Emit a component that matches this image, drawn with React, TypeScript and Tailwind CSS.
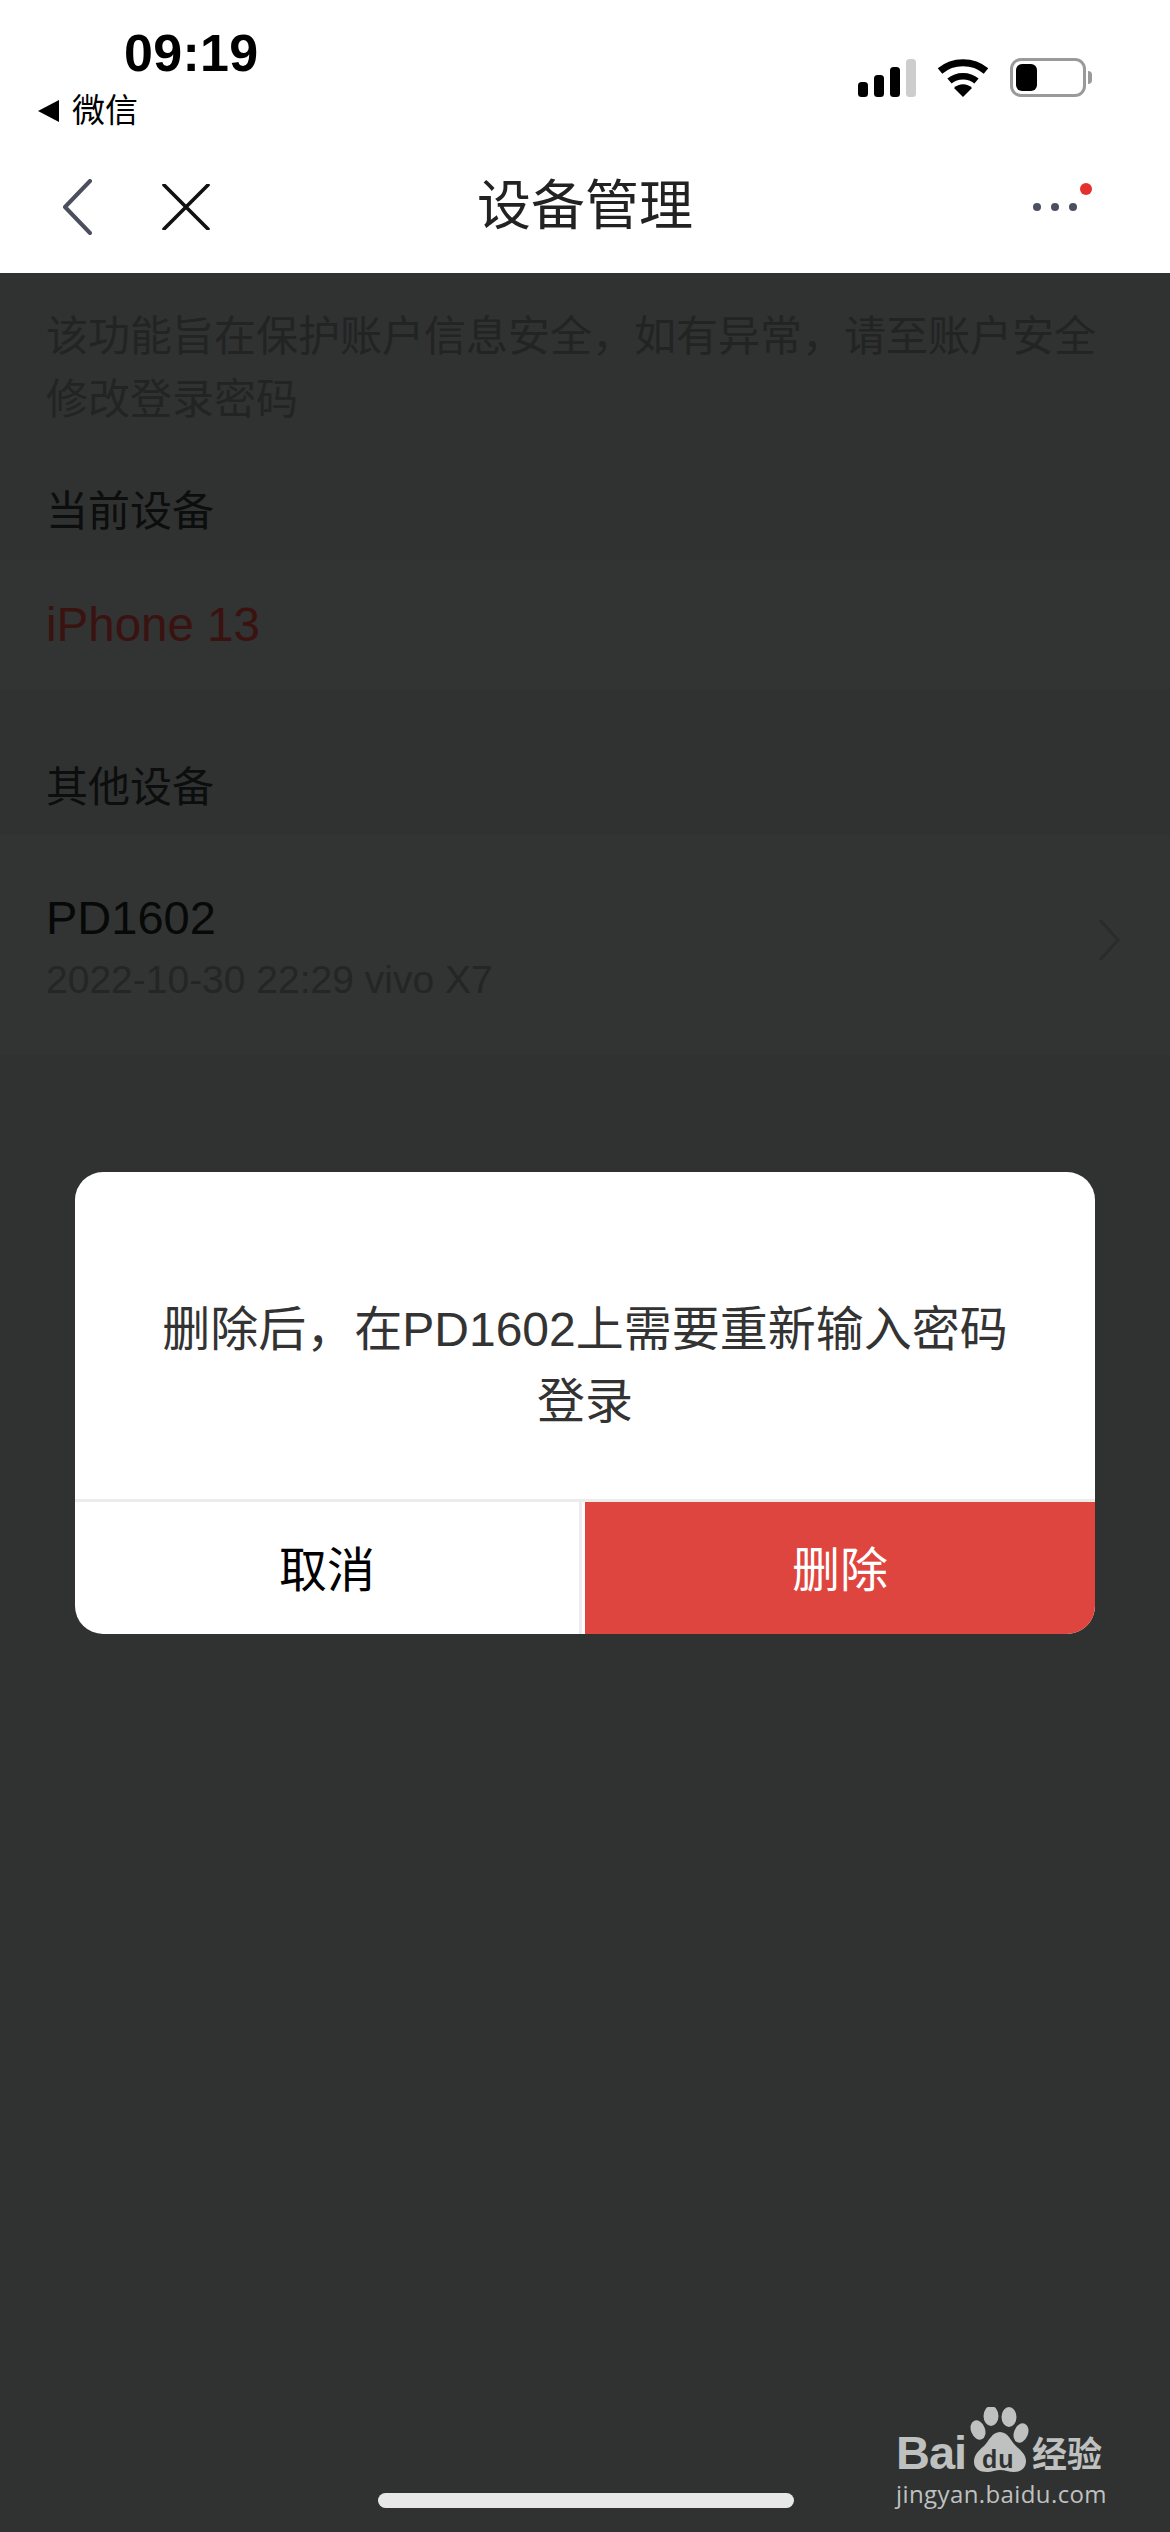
export default function App() {
  const font = "font-['Liberation_Sans','Noto_Sans_CJK_SC',sans-serif]";
  return (
    <div className={`relative w-[1170px] h-[2532px] overflow-hidden bg-[#303131] ${font}`}>
      {/* status + nav */}
      <header className="h-[273px] bg-white flex flex-col">
        <div className="h-[150px] flex justify-between">
          <div className="flex flex-col pl-[38px] pt-[24px]">
            <span className="pl-[86px] text-[52px] leading-[58px] font-bold text-black tracking-[0.3px]">09:19</span>
            <div className="flex items-center gap-[12px] mt-[9px]">
              <svg width="22" height="22" viewBox="0 0 22 22"><path d="M21 0v22L0 11z" fill="#000" /></svg>
              <span className="text-[33px] leading-[40px] text-black">微信</span>
            </div>
          </div>
          <div className="flex items-start pt-[58px] pr-[78px] gap-[21px]">
            <svg width="58" height="38" viewBox="0 0 58 38" className="mt-[1px]">
              <rect x="0" y="23" width="10" height="15" rx="3.5" fill="#000" />
              <rect x="16" y="16" width="10" height="22" rx="3.5" fill="#000" />
              <rect x="32" y="8" width="10" height="30" rx="3.5" fill="#000" />
              <rect x="48" y="0" width="10" height="38" rx="3.5" fill="#cdcdcd" />
            </svg>
            <svg width="52" height="38" viewBox="0 0 52 38" className="mt-[1px]">
              <path d="M3 12C16 1 36 1 49 12" fill="none" stroke="#000" strokeWidth="7" />
              <path d="M12.5 22C20 15.5 32 15.5 39.5 22" fill="none" stroke="#000" strokeWidth="6.5" />
              <path d="M17 29C22 24 30 24 35 29L26 38z" fill="#000" />
            </svg>
            <div className="flex items-center">
              <div className="w-[76px] h-[39px] rounded-[11px] border-[3px] border-[#9a9a9a] p-[3px]">
                <div className="w-[21px] h-full rounded-[6px] bg-black" />
              </div>
              <div className="ml-[2px] w-[4px] h-[13px] rounded-r-[4px] bg-[#9a9a9a]" />
            </div>
          </div>
        </div>
        <div className="relative h-[123px] flex items-center justify-center pb-[11px]">
          <div className="absolute left-[62px] top-[29px]">
            <svg width="30" height="56" viewBox="0 0 30 56"><path d="M28 2L3 28l25 26" fill="none" stroke="#4b4e5c" strokeWidth="4" strokeLinecap="round" strokeLinejoin="round" /></svg>
          </div>
          <div className="absolute left-[162px] top-[34px]">
            <svg width="48" height="46" viewBox="0 0 48 46"><path d="M2 1l44 44M46 1L2 45" fill="none" stroke="#111" strokeWidth="3.6" strokeLinecap="round" /></svg>
          </div>
          <h1 className="text-[54px] leading-[64px] font-normal text-[#222]">设备管理</h1>
          <div className="absolute left-[1032px] top-[32px]">
            <svg width="66" height="32" viewBox="0 0 66 32">
              <circle cx="5" cy="25" r="4" fill="#4b5060" />
              <circle cx="23" cy="25" r="4" fill="#4b5060" />
              <circle cx="41" cy="25" r="4" fill="#4b5060" />
              <circle cx="54" cy="7" r="6" fill="#e5302c" />
            </svg>
          </div>
        </div>
      </header>

      {/* dimmed page */}
      <main className="flex flex-col">
        <div className="h-[287px] px-[46px] pt-[32px]">
          <p className="w-[1060px] text-[42px] leading-[63px] text-[#222323]">该功能旨在保护账户信息安全，如有异常，请至账户安全修改登录密码</p>
          <p className="mt-[49px] text-[42px] leading-[64px] text-[#0c0d0d]">当前设备</p>
        </div>
        <div className="h-[130px] px-[46px] bg-[#323333] flex items-center">
          <span className="text-[47.5px] leading-[56px] text-[#3a1210]">iPhone 13</span>
        </div>
        <div className="h-[145px] px-[46px] pt-[66px]">
          <p className="text-[42px] leading-[64px] text-[#0c0d0d]">其他设备</p>
        </div>
        <div className="h-[220px] pl-[46px] pr-[48px] bg-[#323333] flex items-center justify-between">
          <div className="flex flex-col pt-[2px]">
            <span className="text-[47px] leading-[56px] text-[#070808]">PD1602</span>
            <span className="mt-[11px] text-[39px] leading-[46px] text-[#242525]">2022-10-30 22:29 vivo X7</span>
          </div>
          <svg width="24" height="44" viewBox="0 0 24 44" className="mb-[10px]"><path d="M2 2l18 20L2 42" fill="none" stroke="#2a2b2b" strokeWidth="3" /></svg>
        </div>
      </main>

      {/* dialog */}
      <div className="absolute left-[75px] top-[1172px] w-[1020px] h-[462px] rounded-[28px] overflow-hidden bg-white flex flex-col">
        <div className="h-[327px] flex items-center justify-center px-[80px] pt-[60px]">
          <p className="text-center text-[48px] leading-[72px] text-[#333]">删除后，在PD1602上需要重新输入密码登录</p>
        </div>
        <div className="h-[3px] bg-[#ececec]" />
        <div className="flex-1 flex">
          <button className="w-[507px] border-r-[3px] border-[#ececec] pt-[6px] text-[48px] text-black">取消</button>
          <button className="w-[510px] ml-[3px] pt-[6px] bg-[#df453f] text-[48px] text-white">删除</button>
        </div>
      </div>

      {/* home indicator */}
      <div className="absolute left-[378px] top-[2493px] w-[416px] h-[15px] rounded-full bg-[#e8e8e8]" />

      {/* watermark */}
      <div className="absolute left-[896px] top-[2408px] w-[214px] text-[#bfc1c0]">
        <div className="relative h-[70px]">
          <span className="absolute left-0 top-[22px] text-[47px] leading-[46px] font-bold tracking-[-1px] font-['Liberation_Sans',sans-serif]">Bai</span>
          <svg width="62" height="66" viewBox="0 0 62 66" className="absolute left-[72px] top-[-1px]">
            <ellipse cx="23" cy="9" rx="7.5" ry="10" fill="#bfc1c0" />
            <ellipse cx="41" cy="10" rx="7.5" ry="10" fill="#bfc1c0" />
            <ellipse cx="10" cy="23" rx="7" ry="10" transform="rotate(-22 10 23)" fill="#bfc1c0" />
            <ellipse cx="53" cy="26" rx="7" ry="10" transform="rotate(22 53 26)" fill="#bfc1c0" />
            <path d="M32 25C24 25 21 34 16 39C10 44 6 48 6 55C6 62 12 65 19 65C24 65 28 63 32 63C37 63 41 65 46 65C53 65 58 61 58 54C58 47 52 43 47 38C43 34 40 25 32 25z" fill="#bfc1c0" />
          </svg>
          <span className="absolute left-[86px] top-[38px] text-[25px] leading-[26px] font-bold tracking-[1px] text-[#303131] font-['Liberation_Sans',sans-serif]">du</span>
          <span className="absolute left-[136px] top-[27px] text-[35px] leading-[40px] font-bold whitespace-nowrap">经验</span>
        </div>
        <div className="text-[24px] leading-[32px] font-['Open_Sans',sans-serif] tracking-[0.4px] whitespace-nowrap">jingyan.baidu.com</div>
      </div>
    </div>
  );
}
